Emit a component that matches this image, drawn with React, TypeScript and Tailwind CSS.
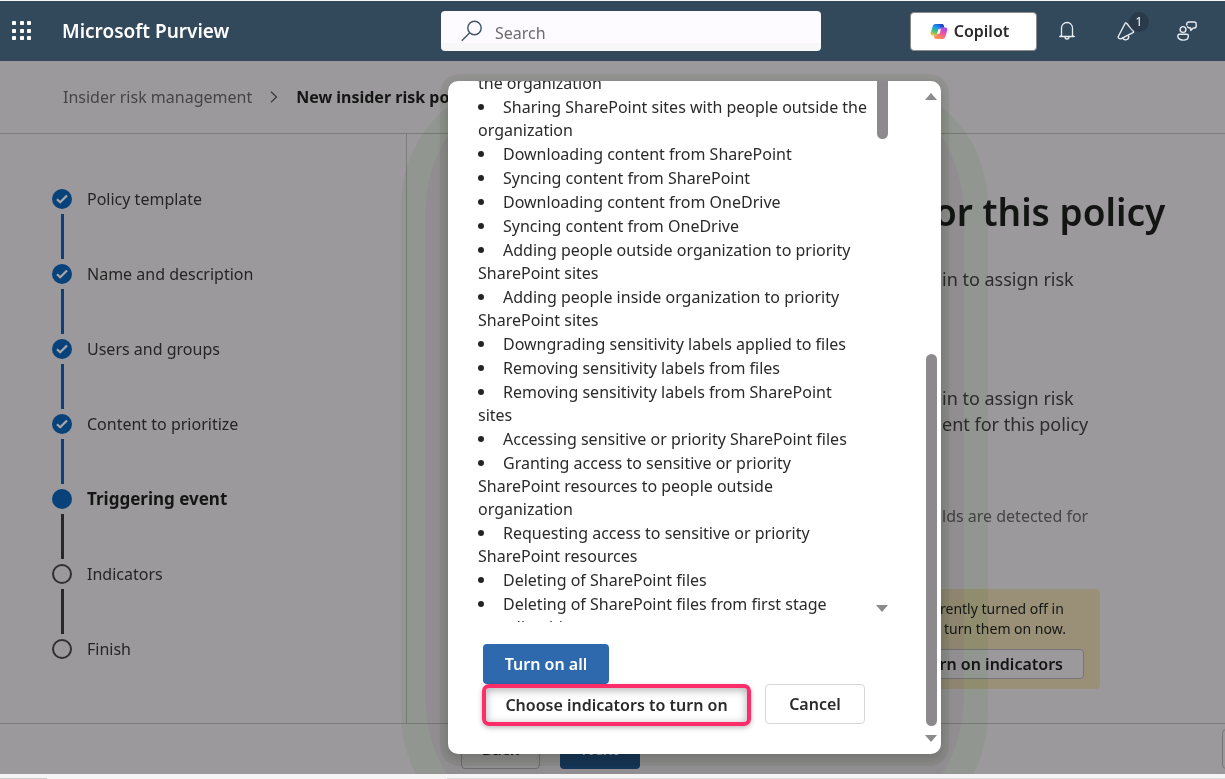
import type { ReactNode } from 'react'

type StepState = 'done' | 'current' | 'todo'

const steps: { label: string; state: StepState }[] = [
  { label: 'Policy template', state: 'done' },
  { label: 'Name and description', state: 'done' },
  { label: 'Users and groups', state: 'done' },
  { label: 'Content to prioritize', state: 'done' },
  { label: 'Triggering event', state: 'current' },
  { label: 'Indicators', state: 'todo' },
  { label: 'Finish', state: 'todo' },
]

const indicators = [
  'Sharing SharePoint sites with people outside the organization',
  'Downloading content from SharePoint',
  'Syncing content from SharePoint',
  'Downloading content from OneDrive',
  'Syncing content from OneDrive',
  'Adding people outside organization to priority SharePoint sites',
  'Adding people inside organization to priority SharePoint sites',
  'Downgrading sensitivity labels applied to files',
  'Removing sensitivity labels from files',
  'Removing sensitivity labels from SharePoint sites',
  'Accessing sensitive or priority SharePoint files',
  'Granting access to sensitive or priority SharePoint resources to people outside organization',
  'Requesting access to sensitive or priority SharePoint resources',
  'Deleting of SharePoint files',
  'Deleting of SharePoint files from first stage recycling bin',
]

function Waffle() {
  return (
    <svg width="20" height="20" viewBox="0 0 20 20" fill="#fff" aria-hidden="true">
      {[0, 8, 15].map((y) => [0, 8, 15].map((x) => <rect key={`${x}-${y}`} x={x} y={y} width="4" height="4" rx="0.8" />))}
    </svg>
  )
}

function CopilotLogo() {
  return (
    <svg width="18" height="17" viewBox="0 0 18 17" aria-hidden="true">
      <defs>
        <linearGradient id="cp-a" x1="0.7" y1="0" x2="0.2" y2="1">
          <stop offset="0" stopColor="#1b4fd8" />
          <stop offset="0.35" stopColor="#1c9bf0" />
          <stop offset="0.65" stopColor="#3fbf7a" />
          <stop offset="1" stopColor="#f4c531" />
        </linearGradient>
        <linearGradient id="cp-b" x1="0.8" y1="0" x2="0.3" y2="1">
          <stop offset="0" stopColor="#a14bf0" />
          <stop offset="0.5" stopColor="#f0569b" />
          <stop offset="1" stopColor="#ff9a4a" />
        </linearGradient>
      </defs>
      <path d="M5.6 1h6c1.2 0 1.8.6 2.2 1.8l.5 1.7h-2.4c-1.3 0-2 .7-2.4 2l-1.200 3.900c-.4 1.400-1.200 2-2.500 2H2.600C.9 12.400.3 11.200.8 9.500l1.900-6.300C3.200 1.700 4.200 1 5.600 1z" fill="url(#cp-a)" />
      <path d="M12.400 16h-6c-1.200 0-1.800-.6-2.200-1.800l-.5-1.800h2.400c1.300 0 2-.7 2.400-2l1.200-3.900c.4-1.400 1.200-2 2.500-2h3.200c1.700 0 2.300 1.200 1.800 2.900l-1.900 6.300C14.800 15.300 13.800 16 12.400 16z" fill="url(#cp-b)" />
      <path d="M10.600 1h1c1.200 0 1.800.6 2.200 1.800l.5 1.700h-4.200z" fill="#2346c8" />
      <path d="M8.300 6.200h2.600l-1.300 4.500H7z" fill="#fff" />
    </svg>
  )
}

function BellIcon() {
  return (
    <svg width="16" height="20" viewBox="0 0 16 20" fill="none" stroke="#e8edf0" strokeWidth="1.3" strokeLinejoin="round" strokeLinecap="round" aria-hidden="true">
      <path d="M2.500 14.500V7a5.500 5.500 0 0 1 11 0v7.500M.8 15.500h14.400M6 16a2 2 0 0 0 4 0M2.500 14.500l-1.700 1M13.500 14.500l1.700 1" />
    </svg>
  )
}

function MegaphoneIcon() {
  return (
    <svg width="18" height="19" viewBox="0 0 18 19" fill="none" stroke="#e8edf0" strokeWidth="1.400" strokeLinejoin="round" strokeLinecap="round" aria-hidden="true">
      <path d="M8.200 1.200 1.400 14.200c-.5 1.100 0 2.200 1.100 2.400l1.300.3L16 10.600c.7-.4.700-1 .2-1.500L9.600 1.300c-.4-.5-1.100-.6-1.400-.1z" />
      <path d="M5.800 16c.6 1.400 2.100 2.200 3.700 1.700s2.500-2 2.100-3.500" />
    </svg>
  )
}

function PersonFeedbackIcon() {
  return (
    <svg width="20" height="20" viewBox="0 0 20 20" fill="none" stroke="#e8edf0" strokeWidth="1.400" strokeLinejoin="round" strokeLinecap="round" aria-hidden="true">
      <circle cx="6" cy="8.500" r="2.900" />
      <path d="M2.500 13.300h7.200c1 0 1.700.7 1.700 1.600 0 2.400-2 4.200-5.300 4.200S.8 17.300.8 14.900c0-.9.7-1.600 1.700-1.600z" />
      <path d="M11.800 1h5.200c1.300 0 2.200.9 2.200 2.100v1.800c0 1.200-.9 2.100-2.200 2.100h-.7l-2.600 2.400V7h-1.200c-.9 0-1.600-.5-1.900-1.200M9.800 4V3.100C9.800 1.900 10.600 1 11.800 1" />
    </svg>
  )
}

function Arrow({ up = false }: { up?: boolean }) {
  return (
    <svg width="12" height="7" viewBox="0 0 12 7" fill="#8c8a8c" aria-hidden="true">
      <path d={up ? 'M6 0l6 7H0z' : 'M0 0h12L6 7z'} />
    </svg>
  )
}

function StepMark({ state }: { state: StepState }) {
  if (state === 'todo') return <span className="size-5 rounded-full border-2 border-[#2f302f]" />
  return (
    <span className="flex size-5 items-center justify-center rounded-full bg-[#07427a]">
      {state === 'done' && (
        <svg width="12" height="10" viewBox="0 0 12 10" fill="none" stroke="#a9a7a9" strokeWidth="2.200" aria-hidden="true">
          <path d="M1 5.200 4.200 8.300 11 1.400" />
        </svg>
      )}
    </span>
  )
}

function Bullet({ children }: { children: ReactNode }) {
  return (
    <li>
      <span className="mr-[19px] mb-1 inline-block size-[6px] rounded-full bg-[#242424] align-middle" />
      {children}
    </li>
  )
}

export default function App() {
  return (
    <div className="flex min-h-screen flex-col bg-[#f6f5f6] pt-px font-['Noto_Sans',sans-serif] text-[16px] text-[#141614]">
      <div className="relative flex flex-1 flex-col overflow-hidden bg-[#9c999c]">
        <header className="flex h-[60px] items-center bg-[#32485b]">
          <div className="flex flex-[429] items-center gap-[30px] pl-3">
            <button aria-label="App launcher">
              <Waffle />
            </button>
            <span className="text-[19px] font-semibold text-white">Microsoft Purview</span>
          </div>
          <label className="flex h-10 w-[380px] items-center gap-3 rounded-[4px] border-b-8 border-[#f7f7f7] bg-[#fdfbff] pt-2 pl-5">
            <svg className="shrink-0" width="22" height="22" viewBox="0 0 22 22" fill="none" stroke="#3f5466" strokeWidth="1.400" aria-label="Search">
              <circle cx="13.500" cy="8" r="6.700" />
              <path d="M8.700 12.800.8 20.700" />
            </svg>
            <input type="search" placeholder="Search" className="w-full bg-transparent pt-1 outline-none placeholder:text-[#6c6a6c]" />
          </label>
          <div className="flex flex-[376] items-center justify-end gap-11 pr-7">
            <button className="flex h-[39px] w-[127px] items-center justify-center gap-1.5 rounded-[4px] border border-[#8d8a8c] bg-white pr-2 font-semibold text-[#2b2b2b]">
              <CopilotLogo />
              Copilot
            </button>
            <div className="-ml-[22px] flex items-center gap-[42px]">
              <button aria-label="Notifications">
                <BellIcon />
              </button>
              <button aria-label="Announcements" className="relative">
                <MegaphoneIcon />
                <span className="absolute -top-2.5 left-3 flex size-5 items-center justify-center rounded-full bg-[#293b4a] text-[12px] text-white">1</span>
              </button>
              <button aria-label="Feedback">
                <PersonFeedbackIcon />
              </button>
            </div>
          </div>
        </header>

        <nav className="flex h-[73px] items-center border-b border-[#7d7c7d] pl-[63px]" aria-label="Breadcrumb">
          <a href="#insider-risk" className="text-[#454545]">Insider risk management</a>
          <svg className="mx-[18px]" width="8" height="12" viewBox="0 0 8 12" fill="none" stroke="#3a3a3a" strokeWidth="1.200" aria-hidden="true">
            <path d="M1 .8 6.500 6 1 11.200" />
          </svg>
          <span className="font-bold">New insider risk po</span>
        </nav>

        <div className="flex flex-1">
          <aside className="w-[407px] border-r border-[#7d7c7d] pt-[55px] pl-[52px]">
            <ol>
              {steps.map((step, i) => (
                <li key={step.label} className="flex gap-[15px]">
                  <div className="flex flex-col items-center">
                    <StepMark state={step.state} />
                    {i < steps.length - 1 && (
                      <span className={step.state === 'done' ? 'my-[5px] h-[45px] w-[3px] bg-[#07427a]' : 'my-[5px] h-[45px] w-[3px] bg-[#262726]'} />
                    )}
                  </div>
                  <span className={step.state === 'current' ? 'h-5 text-[17px] leading-5 font-bold' : 'h-5 leading-5 text-[#242624]'}>{step.label}</span>
                </li>
              ))}
            </ol>
          </aside>

          <main className="flex-1 pt-[50px] pl-[527px] leading-[26px] text-[#2b2c2b]">
            <h1 className="text-[37px] leading-[56px] font-semibold text-[#121512]">or this policy</h1>
            <div className="pl-2 text-[18px]">
              <p className="mt-[26px]">in to assign risk</p>
              <p className="mt-[93px]">in to assign risk</p>
              <p>ent for this policy</p>
              <p className="mt-[66px] text-[16px] text-[#454545]">lds are detected for</p>
            </div>
            <section className="mt-[60px] flex h-[100px] w-[166px] flex-col items-end rounded-[4px] bg-[#9a9077] pt-[10px] pr-4 text-[14px] leading-5 text-[#141614]">
              <div className="w-[144px]">
                <p>rently turned off in</p>
                <p className="pl-1">turn them on now.</p>
              </div>
              <button className="mt-[10px] flex h-[30px] w-[150px] items-center justify-end rounded-[4px] border border-[#76767a] bg-[#9c999c] pr-5 text-[16px] font-semibold">
                rn on indicators
              </button>
            </section>
          </main>
        </div>

        <footer className="flex h-[51px] items-start gap-5 overflow-hidden border-t border-[#7d7c7d] pt-[5px] pl-[461px]">
          <button className="h-10 w-[79px] rounded-[4px] border border-[#767577] font-semibold">Back</button>
          <button className="h-10 w-20 rounded-[4px] bg-[#173a5e] font-semibold text-[#a9a7a9]">Next</button>
          <button className="-mr-10 ml-auto h-10 w-[43px] rounded-[4px] border border-[#767577]" aria-label="Cancel" />
        </footer>

        <div className="absolute inset-0 pt-20 pl-[448px]">
          <div className="relative w-[493px]">
            <div className="absolute -inset-x-[47px] top-1 -bottom-20 rounded-[110px/120px] bg-[#effaed] mix-blend-multiply" />
            <div className="absolute -inset-x-[23px] top-[26px] -bottom-[50px] rounded-[70px/110px] bg-[#fbf1ff] mix-blend-multiply" />
            <div className="absolute -inset-x-2 -top-[7px] -bottom-3 rounded-[20px] bg-[#f1f5ee] mix-blend-multiply" />

            <div role="dialog" aria-label="Turn on indicators" className="relative flex overflow-hidden rounded-[10px] bg-white pb-7 text-[#2a2a2a] shadow-[0_4px_12px_rgba(0,0,0,0.18)]">
              <div className="flex-1">
                <div className="flex h-[541px] overflow-hidden pl-[30px]">
                  <ul className="-mt-[9px] flex w-[391px] shrink-0 flex-col gap-px leading-[23px]">
                    <li>the organization</li>
                    {indicators.map((text) => (
                      <Bullet key={text}>{text}</Bullet>
                    ))}
                  </ul>
                  <div className="ml-[7px] flex w-3 flex-col items-center justify-between pb-[10px]">
                    <span className="h-[58px] w-[11px] rounded-b-full bg-[#8c8a8c]" />
                    <Arrow />
                  </div>
                </div>
                <div className="mt-[22px] flex flex-wrap gap-x-[14px] pl-[35px] font-semibold">
                  <button className="h-10 w-[126px] rounded-[4px] bg-[#2f69ad] text-white">Turn on all</button>
                  <span className="h-0 w-[280px]" />
                  <button className="-ml-px h-[42px] w-[269px] rounded-[7px] border-4 border-[#ff2c6a] shadow-[0_2px_5px_rgba(0,0,0,0.25),inset_0_2px_8px_rgba(0,0,0,0.32)]">
                    Choose indicators to turn on
                  </button>
                  <button className="h-10 w-[100px] rounded-[4px] border border-[#d8d6d8]">Cancel</button>
                </div>
              </div>
              <div className="-mb-4 flex w-[19px] flex-col items-center pt-3 pr-px">
                <Arrow up />
                <span className="mt-[254px] mb-[9px] w-[11px] flex-1 rounded-full bg-[#8c8a8c]" />
                <Arrow />
              </div>
            </div>
          </div>
        </div>
      </div>
      <div className="flex h-[5px] items-end justify-between">
        <span className="h-px w-[47px] bg-[#d0cfd0]" />
        <span className="h-px w-[778px] bg-[#dddcdd]" />
      </div>
    </div>
  )
}
